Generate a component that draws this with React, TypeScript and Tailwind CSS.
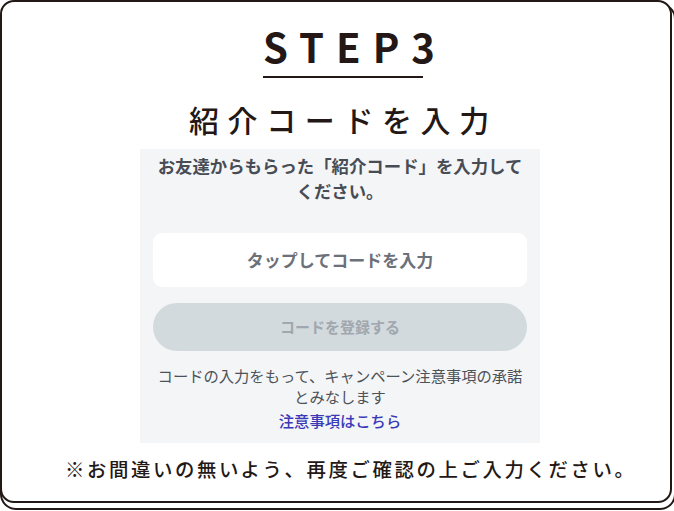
export default function App() {
  return (
    <div className="h-[511px] w-[674px] overflow-hidden bg-white font-['Noto_Sans_CJK_JP','Noto_Sans',sans-serif] text-[#231815]">
      <div className="flex h-[503px] w-[672px] flex-col rounded-[14px] border-2 border-[#231815] bg-white shadow-[2px_5px_0_0_#ffffff,2px_5px_0_2px_#231815]">
        {/* step label */}
        <div className="ml-[261px] mt-[24px] flex flex-col items-start">
          <span className="text-[40px] font-semibold leading-[40px] tracking-[12px]">STEP3</span>
          <span className="mt-[10px] h-[2px] w-[160px] bg-[#231815]" />
        </div>

        <h1 className="ml-[187px] mt-[24px] self-start text-[30px] font-medium leading-[34px] tracking-[8.6px]">
          紹介コードを入力
        </h1>

        {/* app screenshot panel */}
        <div className="ml-[138px] mt-[13px] flex h-[294px] w-[400px] flex-col bg-[#f4f5f7] px-[13px] pt-[4px]">
          <p className="text-center text-[17.4px] font-bold leading-[25px] text-[#474c55]">
            お友達からもらった「紹介コード」を入力して
            <br />
            ください。
          </p>
          <div className="mt-[30px] flex h-[54px] items-center justify-center rounded-[9px] bg-white text-[17px] font-bold text-[#6b7079]">
            タップしてコードを入力
          </div>
          <button
            type="button"
            className="mt-[16px] flex h-[48px] items-center justify-center rounded-full bg-[#d3dade] text-[15px] font-bold text-[#a0a7ae]"
          >
            コードを登録する
          </button>
          <p className="mt-[14px] text-center text-[15.3px] leading-[21px] text-[#4d5259]">
            コードの入力をもって、キャンペーン注意事項の承諾
            <br />
            とみなします
          </p>
          <p className="mt-[3px] text-center text-[15.3px] font-medium leading-[21px] text-[#3a3ab8]">
            注意事項はこちら
          </p>
        </div>

        <p className="ml-[63px] mt-[13px] self-start text-[19.4px] font-medium leading-[26px] tracking-[2.6px]">
          ※お間違いの無いよう、再度ご確認の上ご入力ください。
        </p>
      </div>
    </div>
  );
}
